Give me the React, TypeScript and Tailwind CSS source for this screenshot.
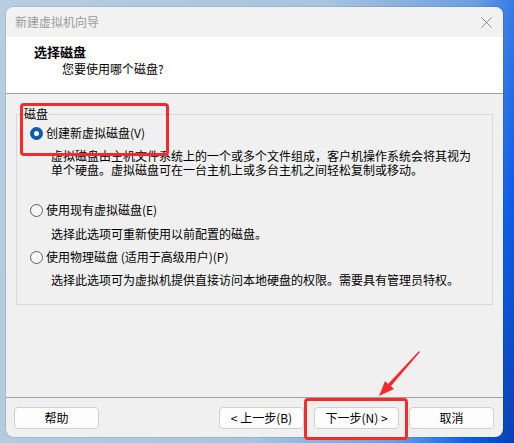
import React from "react";

const font = { fontFamily: '"Noto Sans CJK SC", "Noto Sans", sans-serif' };

function Radio({ checked }: { checked?: boolean }) {
  return checked ? (
    <span className="inline-block w-[13px] h-[13px] rounded-full border-[4px] border-[#0b5cad] bg-white shrink-0" />
  ) : (
    <span className="inline-block w-[13px] h-[13px] rounded-full border border-[#5f5f5f] bg-[#f6f6f6] shrink-0" />
  );
}

function Btn({ children }: { children: React.ReactNode }) {
  return (
    <div className="w-[85px] h-[22px] rounded-[4px] border border-[#cfcfcf] bg-[#fdfdfd] flex items-center justify-center text-[12px] text-black leading-none">
      {children}
    </div>
  );
}

export default function App() {
  return (
    <div
      className="relative w-[514px] h-[443px] overflow-hidden pt-[7px] pl-[6px] bg-[linear-gradient(100deg,#b7cde0_0%,#a9c4de_55%,#6c9fe0_80%,#0f5fe8_92%,#0a3fb0_100%)]"
      style={font}
    >
      <div className="w-[497px] h-[430px] rounded-[8px] overflow-hidden flex flex-col bg-[#f0f0f0] shadow-[0_0_0_1px_rgba(0,0,0,0.08)]">
        {/* title bar */}
        <div className="h-[30px] bg-[#f2f2f2] flex items-center justify-between pl-[9px] pr-[8px]">
          <span className="text-[12px] text-[#9b9b9b] leading-none">新建虚拟机向导</span>
          <svg width="11" height="11" viewBox="0 0 11 11" className="mr-[3px]">
            <path d="M0.5 0.5 L10.5 10.5 M10.5 0.5 L0.5 10.5" stroke="#8a8a8a" strokeWidth="1" />
          </svg>
        </div>
        {/* header */}
        <div className="h-[57px] bg-white border-b border-[#a0a0a0] pl-[28px] pt-[7px] flex flex-col">
          <span className="text-[13px] font-bold text-black leading-[16px]">选择磁盘</span>
          <span className="text-[12px] text-black leading-[16px] mt-[1px] pl-[28px]">您要使用哪个磁盘?</span>
        </div>
        {/* content */}
        <div className="flex-1 px-[10px] pt-[13px]">
          <fieldset className="h-[198px] border border-[#d9d9d9] pl-[13px] pr-[6px]">
            <legend className="-ml-[6px] px-0 text-[12px] leading-[14px] text-black">磁盘</legend>
            <div className="flex items-center gap-[3px] mt-[4px] h-[16px]">
              <Radio checked />
              <span className="text-[12px] leading-[16px] text-black">创建新虚拟磁盘(V)</span>
            </div>
            <div className="pl-[21px] mt-[8px] text-[12px] leading-[14px] text-black whitespace-nowrap">
              <div className="h-[13px]">虚拟磁盘由主机文件系统上的一个或多个文件组成，客户机操作系统会将其视为</div>
              <div className="h-[14px] pt-[1px]">单个硬盘。虚拟磁盘可在一台主机上或多台主机之间轻松复制或移动。</div>
            </div>
            <div className="flex items-center gap-[3px] mt-[26px] h-[16px]">
              <Radio />
              <span className="text-[12px] leading-[16px] text-black">使用现有虚拟磁盘(E)</span>
            </div>
            <div className="pl-[21px] mt-[8px] text-[12px] leading-[16px] text-black whitespace-nowrap">
              选择此选项可重新使用以前配置的磁盘。
            </div>
            <div className="flex items-center gap-[3px] mt-[7px] h-[16px]">
              <Radio />
              <span className="text-[12px] leading-[16px] text-black">使用物理磁盘 (适用于高级用户)(P)</span>
            </div>
            <div className="pl-[21px] mt-[7px] text-[12px] leading-[16px] text-black whitespace-nowrap">
              选择此选项可为虚拟机提供直接访问本地硬盘的权限。需要具有管理员特权。
            </div>
          </fieldset>
        </div>
        {/* footer */}
        <div className="h-[40px] border-t border-[#a0a0a0] flex items-start pt-[9px] pl-[8px] pr-[9px]">
          <Btn>帮助</Btn>
          <div className="flex-1" />
          <div className="flex gap-[10px]">
            <Btn>&lt; 上一步(B)</Btn>
            <Btn>下一步(N) &gt;</Btn>
            <Btn>取消</Btn>
          </div>
        </div>
      </div>

      {/* annotations */}
      <div className="absolute left-[20px] top-[103px] w-[149px] h-[53px] border-[3px] border-[#f52b2b] rounded-[4px]" />
      <div className="absolute left-[304px] top-[398px] w-[104px] h-[42px] border-[3px] border-[#f52b2b] rounded-[4px]" />
      <svg className="absolute left-0 top-0" width="514" height="443">
        <polygon points="419,351 420,352 391,386 394,389 379,396 385,381 388,384" fill="#f52b2b" />
      </svg>
    </div>
  );
}
